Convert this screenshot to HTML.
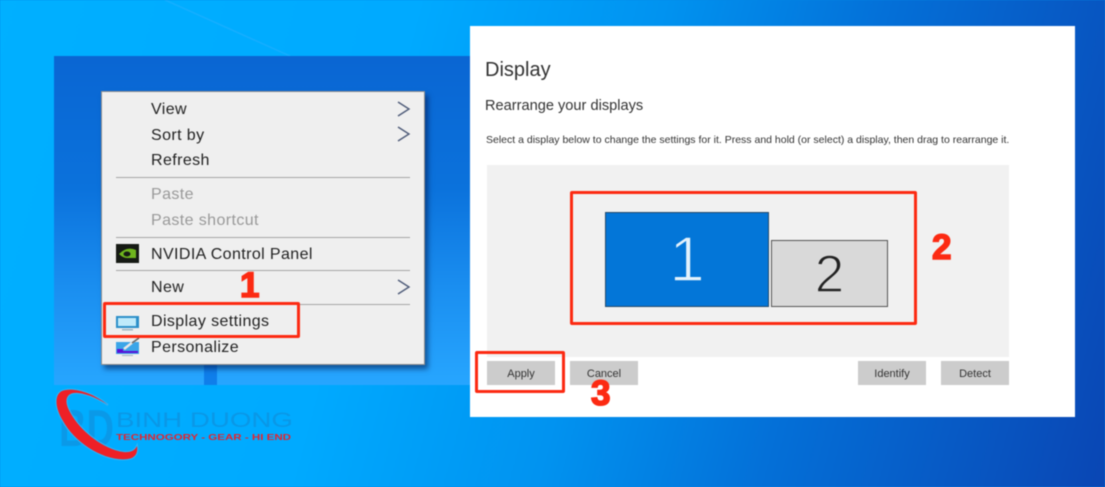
<!DOCTYPE html>
<html><head><meta charset="utf-8"><style>
html,body{margin:0;padding:0;background:#0586e4}
#p{position:relative;width:1105px;height:487px;overflow:hidden;font-family:"Liberation Sans",sans-serif;background:linear-gradient(105deg,#00b0ff 0%,#00aaff 34%,#0193f0 54%,#0470d8 72%,#0a46b4 100%);filter:blur(.4px)}
#p div{position:absolute;white-space:nowrap}
.m{left:151px;font-size:16px;line-height:18px;color:#222;letter-spacing:.4px}
#p .g{color:#999}
.s{left:116px;width:294px;height:1px;background:#a5a5a5}
.b{background:#ccc;font-size:11px;color:#333;text-align:center;height:24px;line-height:26px;width:68px;top:361px}
.r{border:3px solid #fc2a12;border-radius:2px;box-sizing:border-box}
.n{font-weight:bold;color:#fc2a12;font-size:35px;line-height:35px;-webkit-text-stroke:1.6px #fc2a12}
</style></head><body><div id="p">
<svg style="position:absolute;left:0;top:0" width="1105" height="487"><path d="M165 0L290 56" stroke="#3fb2ff" stroke-width="1.5" opacity=".35" fill="none"/></svg>
<div style="left:54px;top:56px;width:416px;height:329px;background:linear-gradient(180deg,#0a66d3 0%,#0b72dc 40%,#1a8ef0 70%,#27a6ff 100%)"></div>
<div style="left:204px;top:365px;width:13px;height:20px;background:#0f7eea"></div>
<div style="left:101px;top:91px;width:322px;height:272px;background:#efefef;border:1px solid #8d8d8d;box-shadow:3px 4px 5px rgba(0,20,70,.55)"></div>
<div class="m" style="top:101px">View</div>
<div class="m" style="top:127px">Sort by</div>
<div class="m" style="top:152px">Refresh</div>
<div class="s" style="top:177px"></div>
<div class="m g" style="top:186px">Paste</div>
<div class="m g" style="top:212px">Paste shortcut</div>
<div class="s" style="top:237px"></div>
<div class="m" style="top:246px">NVIDIA Control Panel</div>
<div class="s" style="top:270px"></div>
<div class="m" style="top:279px">New</div>
<div class="s" style="top:304px"></div>
<div class="m" style="top:313px">Display settings</div>
<div class="m" style="top:339px">Personalize</div>
<svg style="position:absolute;left:0;top:0" width="1105" height="487" fill="none">
<g stroke="#4d5a78" stroke-width="1.4"><path d="M398 102L409 109L398 116"/><path d="M398 127L409 134L398 141"/><path d="M398 280L409 287L398 294"/></g>
<rect x="116" y="244" width="23" height="19" fill="#161a14"/>
<path d="M119 254Q127 246 136 250V258H127Q123 258 119 254Z" fill="#6fb51d"/><ellipse cx="127" cy="254" rx="3.5" ry="2.5" fill="#161a14"/>
<rect x="116" y="316" width="23" height="12" fill="#2c8fc9"/><rect x="118" y="318" width="18" height="8" fill="#bfeafa"/><rect x="122" y="329" width="11" height="1.5" fill="#9db4c0"/>
<rect x="116" y="342" width="23" height="12" fill="#3aa5e8"/><rect x="117" y="349" width="6" height="4" fill="#5a10d8"/><rect x="123" y="351" width="15" height="2" fill="#5a10d8"/><path d="M124 349L138 338" stroke="#e8e8e8" stroke-width="2.5"/><path d="M132 343L139 338" stroke="#666" stroke-width="1.5"/><rect x="122" y="355" width="11" height="1" fill="#9db4c0"/>
</svg>
<div class="r" style="left:103px;top:302px;width:197px;height:36px"></div>
<div class="n" style="left:240px;top:268px">1</div>
<div style="left:470px;top:26px;width:605px;height:391px;background:#fff"></div>
<div style="left:485px;top:57px;font-size:20px;line-height:26px;color:#333">Display</div>
<div style="left:485px;top:97px;font-size:14.6px;line-height:19px;color:#333">Rearrange your displays</div>
<div style="left:486px;top:133px;font-size:10.5px;line-height:14px;color:#333">Select a display below to change the settings for it. Press and hold (or select) a display, then drag to rearrange it.</div>
<div style="left:487px;top:165px;width:522px;height:192px;background:#f1f1f1"></div>
<div style="left:605px;top:212px;width:162px;height:93px;background:#0376d8;border:1.5px solid #264a6a;color:#e4f2fc;font-size:64px;line-height:93px;text-align:center;-webkit-text-stroke:1.6px #0376d8">1</div>
<div style="left:771px;top:240px;width:115px;height:65px;background:#d9d9d9;border:1.5px solid #555;color:#222;font-size:53px;line-height:68px;text-align:center;-webkit-text-stroke:1.4px #d9d9d9">2</div>
<div class="r" style="left:570px;top:191px;width:347px;height:134px"></div>
<div class="n" style="left:932px;top:230px">2</div>
<div class="b" style="left:487px">Apply</div>
<div class="b" style="left:570px">Cancel</div>
<div class="b" style="left:858px">Identify</div>
<div class="b" style="left:941px">Detect</div>
<div class="r" style="left:475px;top:351px;width:90px;height:42px"></div>
<div class="n" style="left:591px;top:376px">3</div>
<svg style="position:absolute;left:0;top:0" width="1105" height="487">
<text x="59" y="446" font-family="Liberation Sans" font-weight="bold" font-size="52" fill="#0a99e8" textLength="55" lengthAdjust="spacingAndGlyphs">BD</text>
<path d="M108 405C92 392 72 387 62 391C54 395 55 408 63 421C75 443 105 462 128 459C136 458 138 452 137 446C134 453 125 454 112 449C92 441 75 424 68 408C64 398 68 392 78 393C88 394 99 399 108 405Z" fill="#ee2027" stroke="#2cb6fb" stroke-width="2" paint-order="stroke"/>
<text x="116" y="427" font-family="Liberation Sans" font-size="21" fill="#0a97e6" textLength="177" lengthAdjust="spacingAndGlyphs">BINH DUONG</text>
<text x="116" y="440" font-family="Liberation Sans" font-weight="bold" font-size="8.5" fill="#e4232e" textLength="175" lengthAdjust="spacingAndGlyphs">TECHNOGORY - GEAR - HI END</text>
</svg>
</div></body></html>
